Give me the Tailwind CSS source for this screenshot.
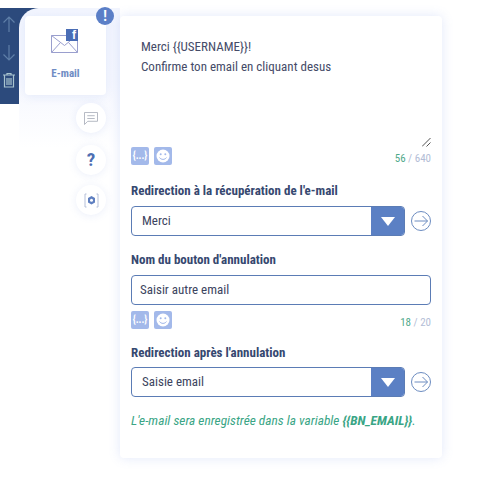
<!DOCTYPE html>
<html lang="fr">
<head>
  <meta charset="UTF-8">
  <title>E-mail</title>
  <script src="https://cdn.jsdelivr.net/npm/@tailwindcss/browser@4"></script>
</head>
<body class="bg-white font-['Roboto',sans-serif] [font-stretch:87%] w-[498px] h-[477px] overflow-hidden">
  <div class="relative flex w-[498px] h-[477px] pt-[16px]">
    <!-- dark toolbar behind the tile -->
    <div class="absolute left-0 top-[8px] w-[50px] h-[96px] bg-[#2c4a7c] rounded-tr-[16px] flex flex-col items-start pl-[2px] pt-[7px] gap-[8px]">
      <svg width="14" height="18" viewBox="0 0 14 18" fill="none" stroke="#5f7fa8" stroke-width="1.2"><path d="M7 17V2M1.500 7.500 7 2l5.500 5.500"/></svg>
      <svg class="mt-[3px]" width="14" height="18" viewBox="0 0 14 18" fill="none" stroke="#5f7fa8" stroke-width="1.2"><path d="M7 1v15M1.500 10.500 7 16l5.500-5.500"/></svg>
      <svg class="mt-[2px]" width="14" height="16" viewBox="0 0 14 16" fill="none" stroke="#a9c4cf" stroke-width="1.2"><path d="M1 3h12M5 3V1.500h4V3M2.500 3v12h9V3M5 6v7M7 6v7M9 6v7"/></svg>
    </div>
    <div class="absolute left-[19px] top-[8px] w-[101px] h-[140px] rounded-tl-[20px] bg-gradient-to-b from-[#f2f5fe] via-[#f5f7fe] to-white"></div>

    <!-- left column -->
    <div class="relative w-[120px] shrink-0">
      <div class="relative ml-[25px] w-[81px] h-[79px] bg-white rounded-[4px] shadow-[0_2px_10px_rgba(110,140,220,0.12)] flex flex-col items-center pt-[12px]">
        <div class="relative w-[28px] h-[26px] ml-[-1px] mt-[1px]">
          <svg class="absolute left-0 top-[6px]" width="27" height="18" viewBox="0 0 27 18" fill="none" stroke="#9a9fce" stroke-width="1"><path d="M.5.5h26v17H.5zM.5.5l13 10 6-5M.5 17.500l9-10M26.500 17.500l-9-10"/></svg>
          <div class="absolute left-[15px] top-0 w-[12px] h-[12px] bg-[#4a6db5] flex justify-end">
            <span class="text-white text-[12px] leading-[13px] font-bold font-['Liberation_Sans',sans-serif] pr-[2px]">f</span>
          </div>
        </div>
        <span class="mt-[12px] text-[11px] leading-[13px] font-bold text-[#6f8cc4]">E-mail</span>
      </div>
      <div class="absolute left-[96px] top-[-9px] w-[18px] h-[18px] rounded-full bg-[#5b7fc7] text-white text-[14px] leading-[18px] font-bold text-center">!</div>

      <div class="ml-[76px] mt-[8px] flex flex-col gap-[10px]">
        <div class="w-[30px] h-[30px] rounded-full bg-white shadow-[0_1px_8px_rgba(110,140,220,0.14)] flex items-center justify-center">
          <svg width="14" height="13" viewBox="0 0 15 14" fill="none" stroke="#b0b4bf" stroke-width="1"><path d="M.5.5h14v9.500H4L.5 13.500zM3.500 4h8M3.500 7h8"/></svg>
        </div>
        <div class="mt-[2px] w-[30px] h-[30px] rounded-full bg-white shadow-[0_1px_8px_rgba(110,140,220,0.14)] flex items-center justify-center text-[19px] font-bold text-[#4e6fb3]">?</div>
        <div class="w-[30px] h-[30px] rounded-full bg-white shadow-[0_1px_8px_rgba(110,140,220,0.14)] flex items-center justify-center">
          <svg width="15" height="15" viewBox="0 0 15 15" fill="none"><path d="M2.500 1H1v13h1.500M12.500 1H14v13h-1.500" stroke="#b5bfd8" stroke-width="1"/><path d="M7.500 3 11 5v4.500L7.500 11.500 4 9.500V5z" fill="#5f7fc0"/><circle cx="7.500" cy="7.300" r="1.500" fill="#fff"/></svg>
        </div>
      </div>
    </div>

    <!-- card -->
    <div class="relative w-[322px] h-[442px] bg-white rounded-[4px] shadow-[0_0_12px_rgba(110,140,230,0.2)] px-[11px] shrink-0">
      <div class="relative h-[131px] pl-[10px] pt-[21px] text-[13px] leading-[20px] text-[#454b68]">
        <p>Merci {{USERNAME}}!</p>
        <p>Confirme ton email en cliquant desus</p>
        <svg class="absolute right-0 top-[122px]" width="9" height="9" viewBox="0 0 9 9" fill="none" stroke="#555" stroke-width="1"><path d="M0 8.500 8.500 0M4.500 8.500 8.500 4.500"/></svg>
      </div>
      <div class="flex items-end justify-between h-[18px]">
        <div class="flex gap-[5px]">
          <span class="w-[18px] h-[18px] rounded-[2px] bg-[#a3b9ea] text-white text-[10px] leading-[18px] text-center font-bold">{...}</span>
          <span class="w-[18px] h-[18px] rounded-[2px] bg-[#a3b9ea] flex items-center justify-center">
            <svg width="14" height="14" viewBox="0 0 14 14"><circle cx="7" cy="7" r="6.500" fill="#fff"/><circle cx="4.700" cy="5.300" r="1" fill="#a3b9ea"/><circle cx="9.300" cy="5.300" r="1" fill="#a3b9ea"/><path d="M3.500 8.500c1.500 2.500 5.500 2.500 7 0" fill="none" stroke="#a3b9ea"/></svg>
          </span>
        </div>
        <span class="text-[11px] leading-[12px] text-[#b3bdd6]"><span class="text-[#4fa98a]">56</span> / 640</span>
      </div>

      <p class="mt-[18px] text-[13px] leading-[16px] font-bold text-[#364870]">Redirection à la récupération de l'e-mail</p>
      <div class="mt-[7px] flex items-center justify-between">
        <div class="w-[274px] h-[30px] border border-[#5b7cb5] rounded-[4px] flex items-center overflow-hidden">
          <span class="flex-1 pl-[10px] text-[13px] text-[#3c4460]">Merci</span>
          <span class="w-[33px] h-[30px] bg-[#5b80c4] flex items-center justify-center">
            <svg width="14" height="9" viewBox="0 0 14 9"><path d="M0 0h14L7 9z" fill="#fff"/></svg>
          </span>
        </div>
        <svg width="20" height="20" viewBox="0 0 20 20" fill="none" stroke="#6c8cc0" stroke-width="1"><circle cx="10" cy="10" r="9.500"/><path d="M3.500 10h13M11.500 5l5 5-5 5"/></svg>
      </div>

      <p class="mt-[16px] text-[13px] leading-[16px] font-bold text-[#364870]">Nom du bouton d'annulation</p>
      <div class="mt-[7px] h-[30px] border border-[#5b7cb5] rounded-[4px] pl-[8px] text-[13px] leading-[28px] text-[#3c4460]">Saisir autre email</div>
      <div class="mt-[6px] flex items-end justify-between h-[18px]">
        <div class="flex gap-[5px]">
          <span class="w-[18px] h-[18px] rounded-[2px] bg-[#a3b9ea] text-white text-[10px] leading-[18px] text-center font-bold">{...}</span>
          <span class="w-[18px] h-[18px] rounded-[2px] bg-[#a3b9ea] flex items-center justify-center">
            <svg width="14" height="14" viewBox="0 0 14 14"><circle cx="7" cy="7" r="6.500" fill="#fff"/><circle cx="4.700" cy="5.300" r="1" fill="#a3b9ea"/><circle cx="9.300" cy="5.300" r="1" fill="#a3b9ea"/><path d="M3.500 8.500c1.500 2.500 5.500 2.500 7 0" fill="none" stroke="#a3b9ea"/></svg>
          </span>
        </div>
        <span class="text-[11px] leading-[12px] text-[#b3bdd6]"><span class="text-[#4fa98a]">18</span> / 20</span>
      </div>

      <p class="mt-[16px] text-[13px] leading-[16px] font-bold text-[#364870]">Redirection après l'annulation</p>
      <div class="mt-[6px] flex items-center justify-between">
        <div class="w-[274px] h-[30px] border border-[#5b7cb5] rounded-[4px] flex items-center overflow-hidden">
          <span class="flex-1 pl-[10px] text-[13px] text-[#3c4460]">Saisie email</span>
          <span class="w-[33px] h-[30px] bg-[#5b80c4] flex items-center justify-center">
            <svg width="14" height="9" viewBox="0 0 14 9"><path d="M0 0h14L7 9z" fill="#fff"/></svg>
          </span>
        </div>
        <svg width="20" height="20" viewBox="0 0 20 20" fill="none" stroke="#6c8cc0" stroke-width="1"><circle cx="10" cy="10" r="9.500"/><path d="M3.500 10h13M11.500 5l5 5-5 5"/></svg>
      </div>

      <p class="mt-[16px] text-[13.4px] leading-[16px] italic text-[#3aa585] whitespace-nowrap">L'e-mail sera enregistrée dans la variable <b>{{BN_EMAIL}}</b>.</p>
    </div>
  </div>
</body>
</html>
